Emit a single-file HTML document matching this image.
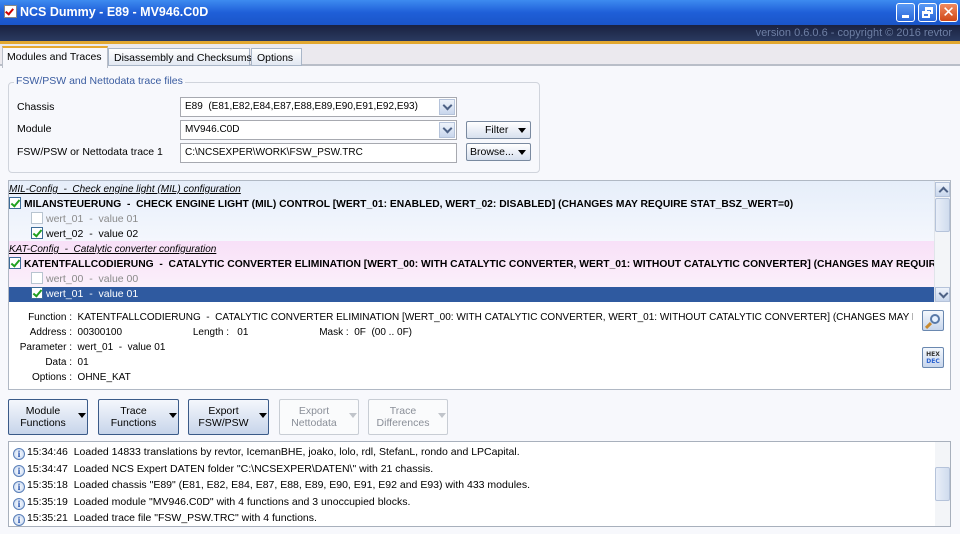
<!DOCTYPE html>
<html><head><style>
*{margin:0;padding:0;box-sizing:border-box}
body{width:960px;height:534px;overflow:hidden;font-family:"Liberation Sans","DejaVu Sans",sans-serif;font-size:10.5px;color:#000;background:#f7f8fc;position:relative}
.a{position:absolute}
.title{left:0;top:0;width:960px;height:25px;background:linear-gradient(#3d8bf0,#1f5fd8 50%,#1a55c8);color:#fff;font-weight:bold;font-size:12.5px;line-height:25px;padding-left:20px}
.bar2{left:0;top:25px;width:960px;height:19px;background:linear-gradient(#1a2240,#2a3a60);border-bottom:3px solid #e2a830}
.ver{right:8px;top:27px;color:#6e7fa4;font-size:11px}
.tabs{left:0;top:44px;width:960px;height:22px;background:#ebe9ee;border-bottom:2px solid #b9bec8}
.tab{top:48px;height:18px;border:1px solid #a9b6c8;background:linear-gradient(#fff,#e2e8f2);padding:3px 5px;font-size:10.5px;white-space:nowrap}
.combo{background:#fff;border:1px solid #a7a9b0;height:20px;padding:3px 4px;font-size:10px;white-space:nowrap}
.dd{width:16px;height:16px;border:1px solid #b5c3da;background:linear-gradient(#eef3fb,#c8d6ec);top:1px;right:1px}
.dd:after{content:"";position:absolute;left:4px;top:2px;width:5px;height:5px;border-right:2px solid #4d6185;border-bottom:2px solid #4d6185;transform:rotate(45deg)}
.up:after{top:5px;transform:rotate(225deg)}
.btn{border:1px solid #7a8aa0;background:linear-gradient(#fff,#d7e0ee);height:20px;padding:3px 6px;font-size:10.5px;border-radius:2px}
.tri{width:0;height:0;border-left:4px solid transparent;border-right:4px solid transparent;border-top:5px solid #000}
.row{left:9px;width:925px;height:15px;line-height:15px;white-space:nowrap;overflow:hidden}
.cb{display:inline-block;width:12px;height:12px;border:1px solid #3d6c98;background:#fff;vertical-align:-2px;margin-right:3px;position:relative}
.cb.c:after{content:"";position:absolute;left:3px;top:0px;width:3px;height:7px;border-right:2px solid #21a121;border-bottom:2px solid #21a121;transform:rotate(40deg)}
.cb.g{border-color:#b8c4d0}
.bb{top:399px;height:36px;border:1px solid #3a5a88;border-radius:2px;background:linear-gradient(#f4f7fc,#c7d5ea);text-align:center;font-size:10.5px;line-height:12px;padding-top:5px;padding-right:10px}
.bb.d{border-color:#c8cdd4;background:#fafbfc;color:#8a8f98}
.log{height:16.5px;line-height:16px;white-space:nowrap}
.ic{display:inline-block;width:12px;height:12px;border-radius:50%;border:1px solid #5a7fb8;background:radial-gradient(#fff,#bcd0ee);font:bold 9px "Liberation Serif",serif;color:#1848a8;text-align:center;line-height:11px;margin:0 2px 0 4px;vertical-align:-2px}
.dl span{display:inline-block;width:63px;text-align:right}
</style></head><body>
<div class="a title">NCS Dummy - E89 - MV946.C0D</div>
<div class="a" style="left:4px;top:5px;width:13px;height:13px;background:#fff;border:1px solid #888"><div class="a" style="left:2px;top:1px;width:5px;height:8px;border-right:2px solid #c00;border-bottom:2px solid #c00;transform:rotate(40deg)"></div></div>
<div class="a" style="left:896px;top:3px;width:19px;height:19px;border:1px solid #fff;border-radius:3px;background:linear-gradient(#5a9af5,#2a66d8)"><div class="a" style="left:5px;top:11px;width:7px;height:3px;background:#fff"></div></div>
<div class="a" style="left:918px;top:3px;width:19px;height:19px;border:1px solid #fff;border-radius:3px;background:linear-gradient(#5a9af5,#2a66d8)"><div class="a" style="left:6px;top:3px;width:8px;height:7px;border:2px solid #fff;border-top-width:3px"></div><div class="a" style="left:3px;top:7px;width:8px;height:7px;border:2px solid #fff;border-top-width:3px;background:#3a76e0"></div></div>
<div class="a" style="left:939px;top:3px;width:19px;height:19px;border:1px solid #fff;border-radius:3px;background:linear-gradient(#f08a60,#d04818);color:#fff;font:bold 15px/17px 'DejaVu Sans';text-align:center">✕</div>
<div class="a bar2"></div>
<div class="a ver">version 0.6.0.6 - copyright © 2016 revtor</div>
<div class="a tabs"></div>
<div class="a" style="left:2px;top:46px;width:106px;height:22px;background:#f7f8fc;border:1px solid #b9bec8;border-bottom:none;border-top:2px solid #e6a830;padding:3px 4px;white-space:nowrap">Modules and Traces</div>
<div class="a tab" style="left:108px;width:142px">Disassembly and Checksums</div>
<div class="a tab" style="left:251px;width:51px">Options</div>

<div class="a" style="left:8px;top:82px;width:532px;height:91px;border:1px solid #d0d4dc;border-radius:4px"></div>
<div class="a" style="left:14px;top:75px;background:#f7f8fc;padding:0 2px;color:#3a5ca0">FSW/PSW and Nettodata trace files</div>
<div class="a" style="left:17px;top:101px">Chassis</div>
<div class="a" style="left:17px;top:123px">Module</div>
<div class="a" style="left:17px;top:146px">FSW/PSW or Nettodata trace 1</div>
<div class="a combo" style="left:180px;top:97px;width:277px">E89 &nbsp;(E81,E82,E84,E87,E88,E89,E90,E91,E92,E93)<div class="a dd"></div></div>
<div class="a combo" style="left:180px;top:120px;width:277px">MV946.C0D<div class="a dd"></div></div>
<div class="a combo" style="left:180px;top:143px;width:277px">C:\NCSEXPER\WORK\FSW_PSW.TRC</div>
<div class="a btn" style="left:466px;top:121px;width:65px;height:18px;padding:2px 0 0 18px">Filter<div class="a tri" style="left:51px;top:6px"></div></div>
<div class="a btn" style="left:466px;top:143px;width:65px;height:18px;padding:2px 0 0 3px">Browse...<div class="a tri" style="left:51px;top:6px"></div></div>

<div class="a" style="left:8px;top:180px;width:943px;height:210px;border:1px solid #b0b8c4;background:#fff"></div>
<div class="a" style="left:9px;top:181px;width:925px;height:60px;background:linear-gradient(#e6eefa,#f4f7fd)"></div>
<div class="a" style="left:9px;top:241px;width:925px;height:46px;background:linear-gradient(#f8e0f8,#fbf0fa)"></div>
<div class="a row" style="top:182px;font-style:italic;text-decoration:underline;font-size:10px">MIL-Config &nbsp;- &nbsp;Check engine light (MIL) configuration</div>
<div class="a row" style="top:197px;font-weight:bold;font-size:10.3px"><span class="cb c"></span>MILANSTEUERUNG &nbsp;- &nbsp;CHECK ENGINE LIGHT (MIL) CONTROL [WERT_01: ENABLED, WERT_02: DISABLED] (CHANGES MAY REQUIRE STAT_BSZ_WERT=0)</div>
<div class="a row" style="top:212px;padding-left:22px;color:#8a8a8a"><span class="cb g"></span>wert_01 &nbsp;- &nbsp;value 01</div>
<div class="a row" style="top:227px;padding-left:22px"><span class="cb c"></span>wert_02 &nbsp;- &nbsp;value 02</div>
<div class="a row" style="top:242px;font-style:italic;text-decoration:underline;font-size:10px">KAT-Config &nbsp;- &nbsp;Catalytic converter configuration</div>
<div class="a row" style="top:257px;font-weight:bold;font-size:10.3px"><span class="cb c"></span>KATENTFALLCODIERUNG &nbsp;- &nbsp;CATALYTIC CONVERTER ELIMINATION [WERT_00: WITH CATALYTIC CONVERTER, WERT_01: WITHOUT CATALYTIC CONVERTER] (CHANGES MAY REQUIRE</div>
<div class="a row" style="top:272px;padding-left:22px;color:#8a8a8a"><span class="cb g"></span>wert_00 &nbsp;- &nbsp;value 00</div>
<div class="a row" style="top:287px;padding-left:22px;background:#2f5aa0;color:#fff;left:9px"><span class="cb c"></span>wert_01 &nbsp;- &nbsp;value 01</div>
<div class="a" style="left:934px;top:181px;width:16px;height:121px;background:#f3f5f8;border-left:1px solid #e0e4ea"></div>
<div class="a dd up" style="left:935px;top:182px;height:15px;width:15px"></div>
<div class="a" style="left:935px;top:198px;width:15px;height:34px;border:1px solid #b5c3da;border-radius:2px;background:linear-gradient(90deg,#e8eef8,#d0dcee)"></div>
<div class="a dd" style="left:935px;top:287px;height:15px;width:15px"></div>

<div class="a dl" style="left:9px;top:310px;width:904px;line-height:15px;white-space:nowrap;overflow:hidden;font-size:10px">
<div><span>Function :</span>&nbsp; KATENTFALLCODIERUNG &nbsp;- &nbsp;CATALYTIC CONVERTER ELIMINATION [WERT_00: WITH CATALYTIC CONVERTER, WERT_01: WITHOUT CATALYTIC CONVERTER] (CHANGES MAY REQUIR</div>
<div><span>Address :</span>&nbsp; 00300100 <i style="display:inline-block;width:68px"></i>Length : &nbsp; 01 <i style="display:inline-block;width:68px"></i>Mask : &nbsp;0F &nbsp;(00 .. 0F)</div>
<div><span>Parameter :</span>&nbsp; wert_01 &nbsp;- &nbsp;value 01</div>
<div><span>Data :</span>&nbsp; 01</div>
<div><span>Options :</span>&nbsp; OHNE_KAT</div>
</div>
<div class="a" style="left:922px;top:310px;width:22px;height:21px;border:1px solid #6a88b0;border-radius:2px;background:linear-gradient(#f4f8fd,#c8d6ec)"><div class="a" style="left:7px;top:3px;width:10px;height:10px;border:2px solid #5a7aa8;border-radius:50%;background:#e8f2ff"></div><div class="a" style="left:2px;top:13px;width:7px;height:3px;background:#c88a30;transform:rotate(-45deg)"></div></div>
<div class="a" style="left:922px;top:347px;width:22px;height:21px;border:1px solid #6a88b0;border-radius:2px;background:linear-gradient(#f4f8fd,#c8d6ec);font:bold 6px/7px 'DejaVu Sans';text-align:center;padding-top:3px;color:#333">HEX<br><span style="color:#2a62d0">DEC</span></div>

<div class="a bb" style="left:8px;width:80px">Module<br>Functions<div class="a tri" style="left:69px;top:13px"></div></div>
<div class="a bb" style="left:98px;width:81px">Trace<br>Functions<div class="a tri" style="left:70px;top:13px"></div></div>
<div class="a bb" style="left:188px;width:81px">Export<br>FSW/PSW<div class="a tri" style="left:70px;top:13px"></div></div>
<div class="a bb d" style="left:279px;width:80px">Export<br>Nettodata<div class="a tri" style="left:69px;top:13px;border-top-color:#c0c4ca"></div></div>
<div class="a bb d" style="left:368px;width:80px">Trace<br>Differences<div class="a tri" style="left:69px;top:13px;border-top-color:#c0c4ca"></div></div>

<div class="a" style="left:8px;top:441px;width:943px;height:86px;border:1px solid #a8b0bc;background:#fff;padding-top:2px;overflow:hidden">
<div class="log"><span class="ic">i</span>15:34:46 &nbsp;Loaded 14833 translations by revtor, IcemanBHE, joako, lolo, rdl, StefanL, rondo and LPCapital.</div>
<div class="log"><span class="ic">i</span>15:34:47 &nbsp;Loaded NCS Expert DATEN folder "C:\NCSEXPER\DATEN\" with 21 chassis.</div>
<div class="log"><span class="ic">i</span>15:35:18 &nbsp;Loaded chassis "E89" (E81, E82, E84, E87, E88, E89, E90, E91, E92 and E93) with 433 modules.</div>
<div class="log"><span class="ic">i</span>15:35:19 &nbsp;Loaded module "MV946.C0D" with 4 functions and 3 unoccupied blocks.</div>
<div class="log"><span class="ic">i</span>15:35:21 &nbsp;Loaded trace file "FSW_PSW.TRC" with 4 functions.</div>
</div>
<div class="a" style="left:935px;top:442px;width:15px;height:84px;background:#f3f5f8"></div>
<div class="a" style="left:935px;top:467px;width:15px;height:34px;border:1px solid #b5c3da;border-radius:2px;background:linear-gradient(90deg,#e8eef8,#d0dcee)"></div>
</body></html>
